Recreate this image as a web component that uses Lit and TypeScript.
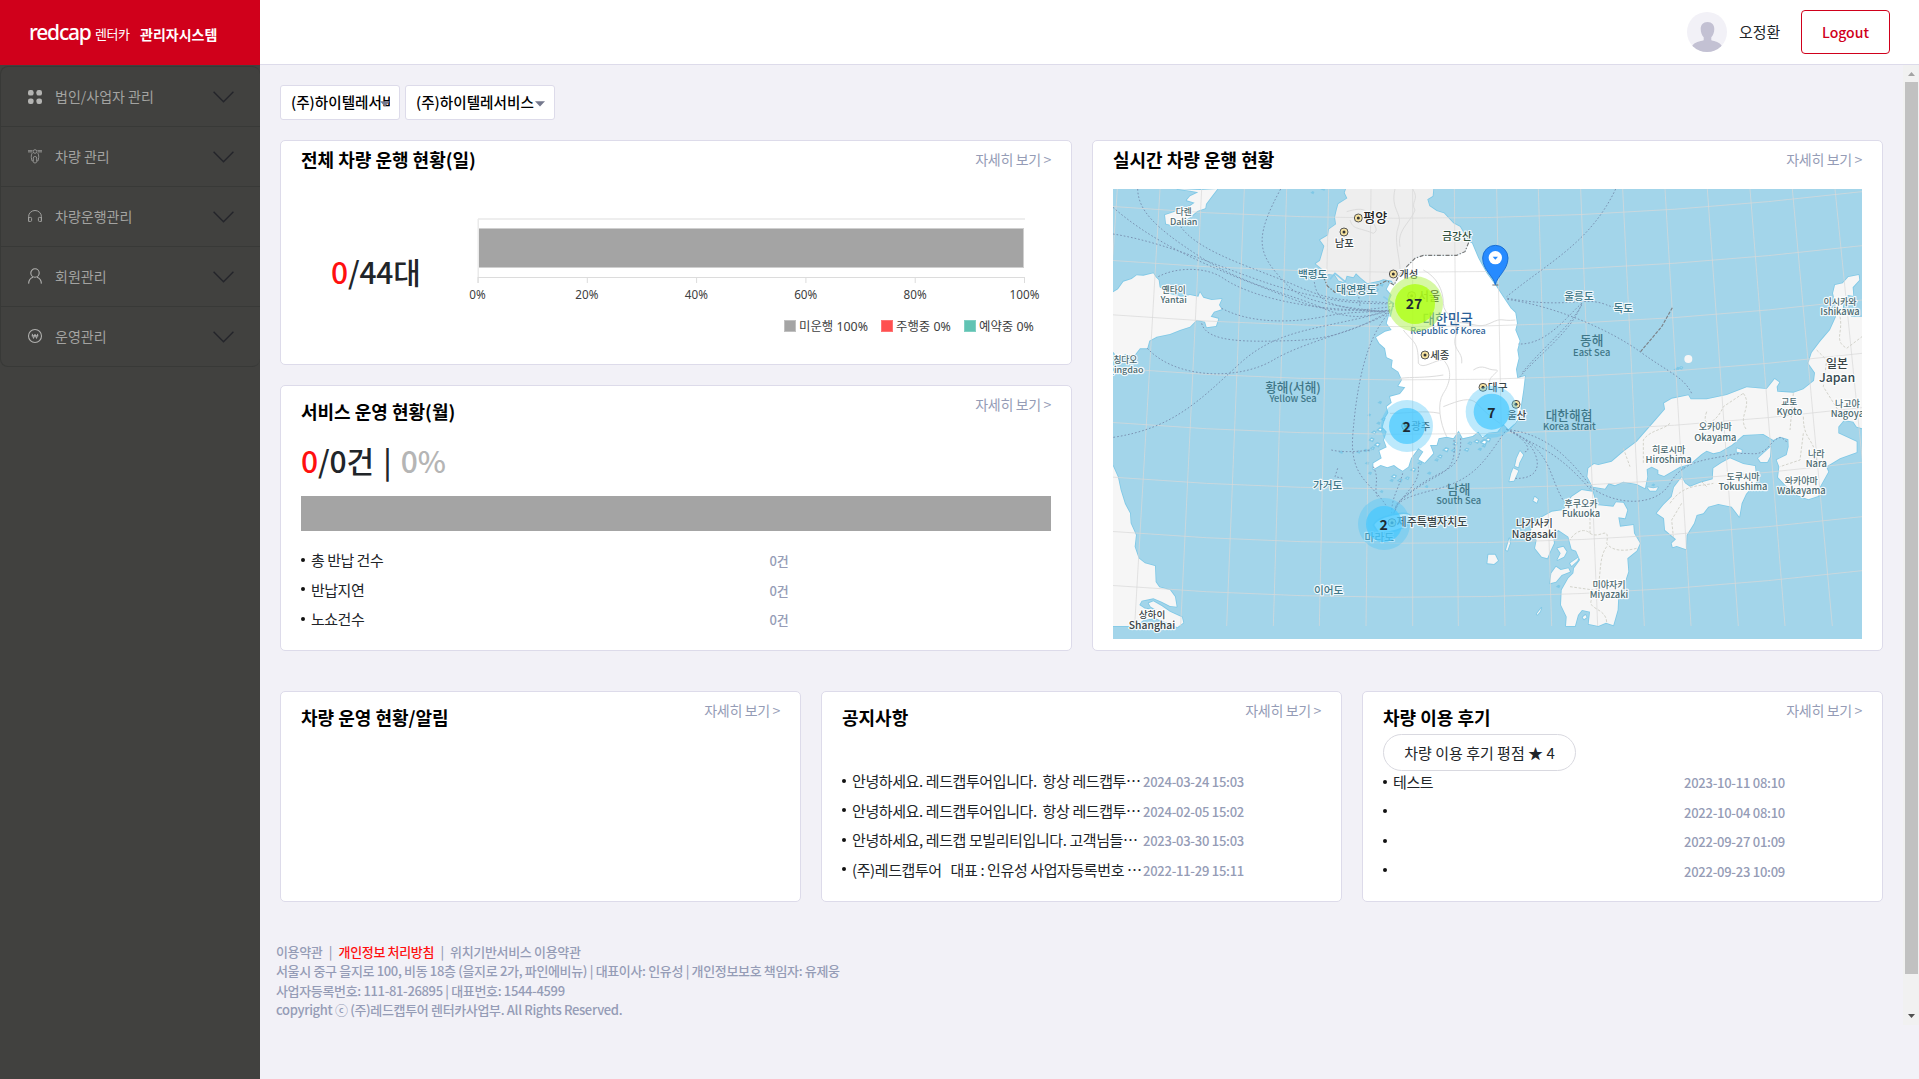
import { LitElement, html, svg, css } from "lit";
import { customElement, property } from "lit/decorators.js";

const MENU = [
  { label: "법인/사업자 관리", icon: "grid" },
  { label: "차량 관리", icon: "scooter" },
  { label: "차량운행관리", icon: "headset" },
  { label: "회원관리", icon: "user" },
  { label: "운영관리", icon: "won" },
];

const ICONS: Record<string, unknown> = {
  grid: svg`<g fill="#b4b4b2" transform="translate(0 1)"><rect x="0" y="0" width="5.6" height="5.6" rx="2.2"/><rect x="8.4" y="0" width="5.6" height="5.6" rx="2.2"/><rect x="0" y="8.4" width="5.6" height="5.6" rx="2.2"/><rect x="8.4" y="8.4" width="5.6" height="5.6" rx="2.2"/></g>`,
  scooter: svg`<g fill="none" stroke="#91918f" stroke-width="1" transform="translate(0 .5)"><path d="M0 1.2H4.6M9.4 1.2H14M0 2.4H4M10 2.4H14"/><circle cx="7" cy="2" r="1.8"/><path d="M4.6 3.2C3.4 4.6 3.2 6 3.3 8L4 11.4H5.2M9.4 3.2C10.6 4.6 10.8 6 10.7 8L10 11.4H8.8"/><rect x="5.3" y="7" width="3.4" height="6.5" rx="1.6"/></g>`,
  headset: svg`<g fill="none" stroke="#a0a09e" stroke-width="1"><path d="M.6 11.5V7.5A6.4 6 0 0 1 13.4 7.5V11.5"/><path d="M.6 8.4H2.6A1 1 0 0 1 3.6 9.4V11.4A1 1 0 0 1 2.6 12.4H.6ZM13.4 8.4H11.4A1 1 0 0 0 10.4 9.4V11.4A1 1 0 0 0 11.4 12.4H13.4Z"/></g>`,
  user: svg`<g fill="none" stroke="#b0b0ae" stroke-width="1.1"><circle cx="7" cy="4" r="4.2"/><path d="M.6 14.6C.8 10.6 3 8.9 5 8.3M13.4 14.6C13.2 10.6 11 8.9 9 8.3"/></g>`,
  won: svg`<g fill="none" stroke="#b0b0ae" stroke-width="1.1"><circle cx="7" cy="7" r="6.5"/><path d="M4.2 4.8L5.5 9.4 7 5.2 8.5 9.4 9.8 4.8M3.6 6.8H10.4" stroke-width="1"/></g>`,
};

const NOTICES = [
  { text: "안녕하세요. 레드캡투어입니다.  항상 레드캡투…", date: "2024-03-24 15:03" },
  { text: "안녕하세요. 레드캡투어입니다.  항상 레드캡투…", date: "2024-02-05 15:02" },
  { text: "안녕하세요, 레드캡 모빌리티입니다. 고객님들…", date: "2023-03-30 15:03" },
  { text: "(주)레드캡투어   대표 : 인유성 사업자등록번호 …", date: "2022-11-29 15:11" },
];

const REVIEWS = [
  { text: "테스트", date: "2023-10-11 08:10" },
  { text: "", date: "2022-10-04 08:10" },
  { text: "", date: "2022-09-27 01:09" },
  { text: "", date: "2022-09-23 10:09" },
];

const RETURNS = [
  { text: "총 반납 건수", date: "0건" },
  { text: "반납지연", date: "0건" },
  { text: "노쇼건수", date: "0건" },
];

/* Side navigation */
@customElement("side-nav")
class SideNav extends LitElement {
  static styles = css`
    :host { display: block; width: 260px; flex: none; background: #41413f; }
    .brand { height: 65px; background: #d0001b; color: #fff; display: flex; align-items: center; box-sizing: border-box; padding: 2px 0 0 29px; }
    .logo { font: 500 21px/26px "Noto Sans", sans-serif; letter-spacing: -1.2px; width: 66px; margin-top: -4px; }
    .sub { font-size: 13px; font-weight: 400; letter-spacing: -0.4px; width: 45px; }
    .sys { font-size: 14px; font-weight: 700; }
    .list { margin-top: 1px; border: 1px solid #383937; border-right: 0; border-radius: 8px; }
    .item { height: 59px; display: flex; align-items: center; border-bottom: 1px solid #383937; padding: 0 26px 0 27px; color: #a3a3a1; font-size: 14px; }
    .item:last-child { border-bottom: 0; }
    .ico { width: 14px; height: 15px; overflow: visible; margin-right: 13px; }
    .label { flex: 1; padding-bottom: 2px; }
    .chev { width: 21px; height: 12px; }
  `;
  render() {
    return html`
      <div class="brand"><span class="logo">redcap</span><span class="sub">렌터카</span><span class="sys">관리자시스템</span></div>
      <div class="list">
        ${MENU.map((m) => html`<div class="item">
          <svg class="ico" viewBox="0 0 14 15">${ICONS[m.icon]}</svg>
          <span class="label">${m.label}</span>
          <svg class="chev" viewBox="0 0 21 12"><path d="M.6.8L10.5 10.7 20.4.8" fill="none" stroke="#24252b" stroke-width="1.4"/></svg>
        </div>`)}
      </div>`;
  }
}

/* Top bar with user and logout */
@customElement("top-bar")
class TopBar extends LitElement {
  static styles = css`
    :host { display: flex; height: 64px; border-bottom: 1px solid #dddbea; background: #fff; align-items: center; justify-content: flex-end; padding-right: 29px; }
    .avatar { width: 40px; height: 40px; margin-right: 12px; }
    .name { font-size: 15px; color: #212529; width: 62px; font-weight: 400; padding-bottom: 1px; }
    .btn { width: 87px; height: 42px; border: 1px solid #d0001b; border-radius: 4px; color: #d0001b; font-size: 14px; font-weight: 500; display: flex; align-items: center; justify-content: center; background: #fff; }
  `;
  render() {
    return html`
      <svg class="avatar" viewBox="0 0 40 40"><defs><clipPath id="c"><circle cx="20" cy="20" r="20"/></clipPath></defs>
        <circle cx="20" cy="20" r="20" fill="#f2f1f7"/>
        <path clip-path="url(#c)" fill="#c3c1d3" d="M20.5 10C25 10 27.3 13 27.3 17C27.3 20.5 26 23.5 24.3 25.2V28.2C28 29.3 32.5 29.8 35 34V40H5V34C7.500 30 13 29.300 16.700 28.200V25.200C15 23.500 13.700 20.500 13.700 17C13.700 13 16 10 20.500 10Z"/></svg>
      <span class="name">오정환</span>
      <div class="btn"><span>Logout</span></div>`;
  }
}

/* White panel with heading and a details link */
@customElement("info-card")
class InfoCard extends LitElement {
  @property() heading = "";
  @property({ type: Boolean, reflect: true }) compact = false;
  static styles = css`
    :host { display: block; box-sizing: border-box; background: #fff; border: 1px solid #dddbea; border-radius: 5px; padding: 0 20px; }
    .head { display: flex; justify-content: space-between; height: 53px; }
    .title { font-size: 18px; line-height: 51px; font-weight: 700; color: #000; }
    .more { font-size: 14px; line-height: 36px; letter-spacing: -0.35px; color: #959cb6; }
    :host([compact]) .head { height: 38px; }
    :host([compact]) .title { line-height: 36px; }
    :host([compact]) .more { line-height: 37px; }
  `;
  render() {
    return html`<div class="head"><span class="title">${this.heading}</span><span class="more">자세히 보기 &gt;</span></div><slot></slot>`;
  }
}

/* Bulleted rows: a text column and a muted value */
@customElement("row-list")
class RowList extends LitElement {
  @property({ attribute: false }) rows: { text: string; date: string }[] = [];
  @property({ type: Boolean, reflect: true }) wide = false;
  static styles = css`
    :host { display: block; }
    .row { display: flex; align-items: center; height: 29.5px; white-space: pre; }
    .dot { width: 4px; height: 4px; border-radius: 2px; background: #111; flex: none; margin-right: 6px; }
    .text { width: 291px; flex: none; font-size: 15px; letter-spacing: -0.4px; color: #212529; }
    .date { font-size: 13px; font-weight: 500; color: #959cb6; letter-spacing: -0.25px; padding-top: 2px; }
    :host([wide]) .text { width: 458.5px; letter-spacing: -0.5px; }
  `;
  render() {
    return this.rows.map((r) => html`<div class="row"><span class="dot"></span><span class="text">${r.text}</span><span class="date">${r.date}</span></div>`);
  }
}

/* Stacked share-of-fleet bar */
@customElement("fleet-chart")
class FleetChart extends LitElement {
  static styles = css`
    :host { display: block; }
    .plot { display: block; width: 591px; height: 184px; }
    .lab { font: 11.7px "Noto Sans", "Noto Sans CJK KR", sans-serif; fill: #404040; }
    .key { font: 12.4px "Noto Sans", "Noto Sans CJK KR", sans-serif; fill: #404040; }
  `;
  render() {
    const ticks = [0, 20, 40, 60, 80, 100];
    const legend = [
      { x: 784, t: "미운행 100%", c: "#a4a4a4", b: "#c0c0c0" },
      { x: 881, t: "주행중 0%", c: "#ff4f4f", b: "#ff7373" },
      { x: 964, t: "예약중 0%", c: "#60c3b3", b: "#80d0c3" },
    ];
    return html`<svg class="plot" viewBox="460 179 591 184">
      <rect x="478" y="218" width="547" height="2" fill="#eeeeee"/>
      <rect x="477.500" y="219" width="1.500" height="64" fill="#eaeaea"/>
      <rect x="479" y="228" width="545" height="40" fill="#cfcfcf"/>
      <rect x="479" y="229" width="544" height="38" fill="#a4a4a4"/>
      <rect x="478" y="277" width="547" height="1" fill="#dcdcdc"/>
      ${ticks.map((t) => svg`<rect x=${477.5 + t * 5.465} y="277" width="1" height="6" fill="#dcdcdc"/><text class="lab" text-anchor="middle" x=${477.5 + t * 5.47} y="299">${t}%</text>`)}
      ${legend.map((l) => svg`<rect x=${l.x + 0.5} y="320.500" width="11" height="11" fill=${l.c} stroke=${l.b}/><text class="key" x=${l.x + 15} y="331">${l.t}</text>`)}
    </svg>`;
  }
}

type Label = [string, number, number, number, string];

const INK = "#3a4446";
const TEAL = "#3f7788";
const SLATE = "#4c6a70";

/* Text, centre x, baseline y, size, colour; units are a third of a pixel */
const LABELS: Label[] = [
  ["다렌", 281, 254, 26, SLATE], ["Dalian", 281, 284, 27, SLATE],
  ["평양", 856, 276, 39, "#222"], ["남포", 763, 350, 31, INK],
  ["금강산", 1101, 329, 32, "#30503c"], ["백령도", 668, 443, 32, TEAL],
  ["대연평도", 799, 491, 33, TEAL], ["개성", 956, 443, 31, INK],
  ["서울", 1017, 512, 36, "#222"],
  ["세종", 1049, 686, 31, INK],
  ["옌타이", 251, 488, 26, SLATE], ["Yantai", 251, 518, 27, SLATE],
  ["칭다오", 106, 700, 26, SLATE], ["Qingdao", 106, 730, 27, SLATE],
  ["울릉도", 1467, 510, 32, TEAL], ["독도", 1600, 547, 32, TEAL],
  ["이시카와", 2250, 525, 27, SLATE], ["Ishikawa", 2250, 555, 28, SLATE],
  ["일본", 2241, 715, 36, INK], ["Japan", 2241, 755, 37, "#34484f"],
  ["대구", 1223, 783, 32, INK], ["울산", 1280, 868, 31, INK], ["광주", 992, 899, 31, INK],
  ["교토", 2098, 824, 26, SLATE], ["Kyoto", 2098, 855, 28, SLATE],
  ["나고야", 2272, 831, 27, SLATE], ["Nagoya", 2272, 862, 28, SLATE],
  ["오카야마", 1876, 900, 27, SLATE], ["Okayama", 1876, 932, 28, SLATE],
  ["히로시마", 1736, 968, 27, SLATE], ["Hiroshima", 1736, 998, 28, SLATE],
  ["나라", 2179, 982, 27, SLATE], ["Nara", 2179, 1011, 28, SLATE],
  ["도쿠시마", 1959, 1051, 27, SLATE], ["Tokushima", 1959, 1080, 28, SLATE],
  ["와카야마", 2134, 1062, 27, SLATE], ["Wakayama", 2134, 1092, 28, SLATE],
  ["후쿠오카", 1473, 1132, 27, SLATE], ["Fukuoka", 1473, 1162, 28, SLATE],
  ["나가사키", 1333, 1191, 30, INK], ["Nagasaki", 1333, 1224, 31, INK],
  ["미야자키", 1557, 1374, 27, SLATE], ["Miyazaki", 1557, 1404, 28, SLATE],
  ["가거도", 713, 1077, 32, TEAL], ["이어도", 716, 1391, 32, TEAL],
  ["마라도", 868, 1233, 32, TEAL], ["제주특별자치도", 1026, 1189, 33, INK],
  ["상하이", 186, 1465, 29, INK], ["Shanghai", 186, 1498, 31, INK],
];

const SEA_LABELS: Label[] = [
  ["대한민국", 1073, 583, 41, "#2b6198"], ["Republic of Korea", 1074, 613, 27, "#2b6198"],
  ["황해(서해)", 609, 787, 38, TEAL], ["Yellow Sea", 609, 817, 28, TEAL],
  ["동해", 1505, 646, 38, TEAL], ["East Sea", 1505, 677, 28, TEAL],
  ["대한해협", 1437, 870, 38, TEAL], ["Korea Strait", 1438, 901, 28, TEAL],
  ["남해", 1106, 1092, 38, TEAL], ["South Sea", 1106, 1122, 28, TEAL],
];

const CITIES = [[805, 264], [762, 306], [910, 432], [965, 497], [1005, 675], [1179, 772], [1278, 823], [906, 1178], [947, 888]];

const MERIDIANS = [[82, -5], [210, 134], [335, 272], [463, 410], [590, 550], [716, 688], [843, 828], [968, 968], [1093, 1105], [1220, 1245], [1345, 1385], [1472, 1523], [1598, 1663], [1725, 1803], [1852, 1945], [1980, 2085], [2107, 2227], [2235, 2367]];
const PARALLELS = [265, 427, 590, 750, 913, 1077, 1240, 1402];

const CHINA = [
  "M262 177L330 180 382 177 362 203 348 222 346 235 322 243 300 262 280 275 242 285 228 281 225 255 250 247 270 237 300 228 314 218 290 211 300 199 325 187 300 182Z",
  "M69 487L84 478 100 455 125 447 140 436 160 437 190 430 197 441 206 450 209 472 240 492 275 500 300 495 325 500 330 487 340 503 365 510 395 507 387 525 395 538 372 545 362 560 385 566 378 588 350 592 345 575 320 570 300 590 270 600 240 612 200 620 178 632 172 655 150 655 130 680 105 672 90 690 69 665Z",
  "M69 1008L84 1042 92 1080 105 1122 120 1150 122 1180 138 1215 134 1250 146 1285 165 1300 195 1308 197 1356 208 1372 240 1380 255 1400 260 1430 240 1428 215 1415 190 1405 155 1412 148 1425 165 1436 200 1440 182 1430 176 1420 190 1414 215 1428 240 1445 276 1462 280 1478 262 1492 235 1480 195 1465 160 1470 140 1488H69Z",
];
const NORTH = "M768 177L764 188 772 205 745 222 740 240 735 262 738 283 717 298 714 316 690 330 703 348 696 372 690 392 677 401 700 420 702 438 716 432 735 435 746 452 764 457 770 437 790 442 798 430 812 443 832 460 868 452 880 448 905 452 912 465 925 440 950 410 975 385 1000 376 1060 376 1100 376 1125 365 1137 335 1110 290 1090 280 1062 250 1040 243 1018 228 1012 208 1028 198 1030 177Z";
const SOUTH = "M1137 335L1146 340 1165 385 1190 430 1218 468 1242 505 1262 535 1276 548 1281 580 1276 600 1289 632 1282 660 1286 685 1278 718 1282 745 1305 738 1300 780 1294 820 1288 860 1275 880 1255 898 1240 882 1222 905 1195 908 1178 922 1165 905 1148 918 1118 925 1106 902 1090 925 1070 920 1046 925 1040 945 1020 945 1030 970 1004 998 985 988 1000 965 985 955 963 985 955 1010 938 1022 925 1015 912 1005 892 1012 872 1005 850 1018 850 1000 875 985 868 962 890 952 882 930 890 905 878 892 885 865 895 848 890 830 905 818 900 800 930 792 946 772 925 768 936 750 925 725 905 712 908 690 890 682 885 655 868 640 858 622 885 605 905 600 890 580 900 545 895 520 905 495 890 478 902 455 912 465 925 440 950 410 975 385 1000 376 1100 376 1125 365Z";
const JAPAN = [
  "M2306 435L2275 441 2258 460 2235 465 2229 490 2236 520 2238 560 2220 600 2190 635 2165 668 2155 700 2175 728 2172 752 2140 778 2110 788 2062 785 2060 770 2068 757 2054 747 2030 777 1970 772 1910 795 1850 808 1802 808 1795 796 1745 806 1722 820 1725 838 1690 878 1640 935 1600 965 1565 995 1525 1005 1512 1002 1495 1015 1492 1040 1508 1070 1545 1076 1556 1060 1575 1066 1600 1055 1640 1062 1665 1075 1672 1040 1670 1018 1685 1010 1705 1020 1705 1032 1722 1038 1770 1010 1800 1002 1835 972 1850 962 1870 970 1890 965 1925 945 1960 915 2020 912 2050 930 2070 920 2095 928 2096 950 2090 975 2060 990 2068 1010 2064 1042 2095 1075 2120 1095 2155 1108 2185 1098 2190 1070 2215 1025 2208 1010 2250 985 2300 967 2300 935 2245 910 2245 890 2262 870 2290 875 2300 890 2316 895V560L2285 560 2258 540 2262 505 2275 495 2290 498 2288 472 2308 450Z",
  "M1445 1100L1475 1080 1508 1085 1520 1125 1570 1130 1578 1117 1600 1118 1612 1140 1605 1165 1585 1162 1590 1190 1630 1185 1632 1210 1650 1240 1640 1262 1612 1285 1615 1325 1600 1370 1585 1395 1583 1440 1570 1486 1548 1478 1525 1488 1496 1482 1500 1445 1476 1440 1464 1455 1455 1488H1428L1430 1460 1413 1425 1415 1380 1435 1345 1450 1330 1452 1315 1470 1290 1458 1262 1445 1258 1435 1220 1405 1200 1388 1210 1392 1240 1380 1265 1372 1285 1355 1280 1335 1255 1340 1230 1318 1210 1340 1170 1385 1145 1420 1140Z",
  "M1775 1042L1785 1060 1800 1070 1830 1058 1868 1048 1870 1015 1895 998 1920 985 1960 1002 1995 1008 2000 1055 1968 1092 1955 1120 1948 1160 1925 1130 1885 1122 1855 1130 1840 1150 1820 1155 1812 1180 1790 1215 1788 1258 1760 1248 1748 1252 1745 1240 1758 1228 1725 1200 1722 1165 1700 1150 1720 1125 1745 1100 1752 1072Z",
  "M2042 950L2018 972 2004 985 2012 996 2032 996 2040 980Z",
  "M1940 955L1955 960 1955 968 1940 965Z", "M1672 1072L1690 1075 1704 1072 1698 1082 1680 1082Z",
  "M1290 963L1300 975 1288 998 1285 1012 1275 1008 1280 985Z", "M1270 1015L1285 1022 1272 1052 1258 1054 1264 1030Z",
  "M1334 1100L1344 1108 1340 1118 1330 1112Z", "M1402 1255L1420 1250 1430 1265 1422 1280 1402 1290 1412 1270Z",
  "M1380 1360L1384 1330 1398 1310 1412 1320 1435 1315 1440 1325 1415 1335 1398 1355Z",
  "M1195 1274L1215 1274 1224 1292 1212 1302 1192 1300Z", "M1248 1260L1258 1225 1260 1240 1252 1262Z",
  "M1340 1452L1354 1434 1350 1445 1342 1454Z", "M1440 1300L1466 1282 1462 1292 1445 1308Z",
  "M1478 1462L1486 1455 1490 1462 1482 1468Z",
];

const ISLETS = [[870, 900, 8], [852, 908, 6], [845, 930, 7], [862, 945, 8], [848, 955, 5], [835, 962, 4], [866, 880, 4], [880, 868, 5], [826, 962, 4], [840, 1030, 4], [832, 1000, 4], [912, 1040, 7], [930, 1052, 6], [952, 1045, 5], [970, 1020, 7], [990, 1000, 5], [1018, 1030, 4], [1050, 980, 6], [1040, 990, 4], [1068, 960, 8], [1090, 962, 5], [1096, 942, 6], [1130, 960, 6], [1140, 940, 5], [1160, 935, 7], [1182, 935, 9], [1170, 958, 4], [1010, 1070, 3], [875, 1085, 3], [905, 1052, 4], [838, 855, 3], [870, 818, 4], [1182, 938, 10], [1194, 930, 8], [1182, 948, 4], [754, 967, 4], [806, 966, 4], [668, 188, 3], [700, 177, 5], [1763, 716, 4], [1773, 714, 5], [1757, 719, 3], [860, 480, 5], [842, 490, 3], [875, 465, 4], [1405, 1370, 4], [1778, 1015, 4], [1690, 1065, 3]];

const ROUTES = [
  "M143 177C145 240 190 290 330 380S600 490 700 535S860 552 905 536",
  "M69 232C180 330 330 400 500 465S700 560 915 528",
  "M69 312C250 340 450 440 600 480S800 520 915 522",
  "M272 290C330 370 500 415 620 468S780 508 910 520",
  "M572 177C500 310 500 360 560 430S640 520 890 546",
  "M205 440C260 410 350 410 400 445S600 545 905 542",
  "M395 535C480 580 600 580 700 560S850 550 905 540",
  "M335 580C350 640 480 635 600 632S800 600 905 540",
  "M172 655C260 750 450 750 550 690S850 590 905 540",
  "M70 922C250 895 330 810 450 700S700 600 905 540",
  "M672 445C675 500 700 520 780 535S860 545 900 540",
  "M805 490L810 530",
  "M898 548C830 620 800 760 788 920C780 1050 850 1060 890 1130",
  "M724 960C760 968 800 965 845 960", "M743 1015L735 1040 760 1045",
  "M850 1010C870 1050 850 1070 862 1100", "M938 1030C925 1080 905 1100 905 1150",
  "M985 1010C990 1060 950 1080 912 1140",
  "M1092 930C1100 1030 1060 1020 980 1075S930 1120 910 1150",
  "M1112 925C1115 1030 1060 1010 975 1075S930 1120 912 1150",
  "M1245 905C1180 1000 1150 1050 1030 1080S930 1120 910 1150",
  "M1250 898C1350 910 1420 960 1495 1060", "M1250 898C1340 950 1400 960 1500 1078",
  "M1250 898C1390 960 1370 1030 1422 1115", "M1250 898C1340 925 1390 1050 1275 1045",
  "M1250 898C1310 925 1330 970 1300 965",
  "M1500 1070C1580 1130 1700 1130 1740 1060S1850 990 1920 975S2000 990 2040 945S2080 938 2092 934",
  "M1577 177C1500 340 1370 400 1250 500", "M1252 505C1350 522 1400 520 1470 515S1550 530 1570 530",
  "M1252 508C1400 530 1560 600 1650 665S1780 740 1805 790",
  "M1475 520C1450 600 1340 680 1290 740", "M1475 520C1430 560 1370 645 1285 642",
  "M1475 525C1440 590 1360 650 1295 730",
];

const PROVINCES = "M915 177C900 240 940 250 925 290S930 380 930 420M968 177C990 210 960 215 975 240C960 280 920 300 930 350M770 245C820 230 830 240 840 262S870 300 850 310C800 290 790 300 780 270M1000 420C1040 440 1060 480 1060 520S1110 560 1100 610M940 600C970 640 985 630 985 700C1000 720 1030 690 1060 690M1090 580C1140 570 1160 600 1200 580S1230 575 1276 570M1060 690C1090 720 1080 760 1060 790S1050 880 1070 920M930 745C970 740 1000 745 1060 735M1060 830C1110 810 1140 800 1160 820S1200 860 1230 880M900 850C960 850 1000 840 1050 850M1150 720C1180 700 1190 720 1215 720S1190 740 1200 760M1100 610C1080 660 1120 660 1115 700";
const PREFECTURES = "M2250 560C2260 610 2230 630 2270 655L2316 620M2180 660L2210 690 2200 770 2250 850M1960 790C1990 830 1940 860 1970 900M1850 845C1830 900 1880 880 1900 830L1960 790M1740 880C1720 900 1680 900 1660 930V1000M1600 955L1620 1010M2110 790L2100 900M2140 860C2140 940 2180 920 2180 1010M2140 910L2130 990 2070 1010M1740 1120C1780 1060 1830 1070 1870 1060M1775 1120L1745 1170 1750 1220M1850 1070L1830 1050M1500 1150V1210C1480 1190 1450 1210 1440 1230M1500 1210C1530 1230 1560 1180 1550 1240C1570 1270 1620 1260 1640 1255M1550 1250C1520 1290 1540 1360 1510 1400S1550 1430 1550 1478M1440 1370L1510 1380";

/* Live vehicle map with clustered positions */
@customElement("live-map")
class LiveMap extends LitElement {
  static styles = css`
    :host { display: block; margin-top: 10px; }
    .map { display: block; width: 749px; height: 450px; background: #a3d5ea; }
    .lbl { font-family: "Noto Sans CJK KR", sans-serif; font-weight: 500; text-anchor: middle; }
    .sea { font-family: "Noto Sans CJK KR", sans-serif; font-weight: 500; text-anchor: middle; }
    .halo { stroke: #fff; stroke-opacity: 0.85; stroke-width: 7px; stroke-linejoin: round; paint-order: stroke; }
    .num { font: 700 42px "Noto Sans CJK KR", sans-serif; fill: #1d2a33; text-anchor: middle; }
  `;
  render() {
    return html`<svg class="map" viewBox="69 177 2247 1350">
      <g stroke="#7fc8e6" stroke-width="5" stroke-linejoin="round">
        <g fill="#f6f6f6">${[...CHINA, ...JAPAN].map((d) => svg`<path d=${d}/>`)}</g>
        <path d=${SOUTH} fill="#fff"/><path d=${NORTH} fill="#eeeeee"/>
        <path d="M850 1185C860 1165 900 1152 935 1150S965 1165 955 1180S900 1212 865 1208Z" fill="#fff"/>
      </g>
      <g fill="#f6f6f6">${[...CHINA, ...JAPAN].map((d) => svg`<path d=${d}/>`)}<circle cx="1795" cy="687" r="12"/></g>
      <path d=${SOUTH} fill="#fff"/><path d=${NORTH} fill="#eeeeee"/>
      <path d="M720 448L735 430 765 455 750 470M880 500L910 520 900 560" fill="none" stroke="#8accea" stroke-width="5"/>
      <g fill="#fff" stroke="#7fc8e6" stroke-width="4">${ISLETS.map((p) => svg`<path d="M${p[0] - p[2]} ${p[1]}l${p[2]} ${-p[2] * 0.8} ${p[2] * 0.9} ${p[2] * 0.4} ${-p[2] * 0.5} ${p[2]}Z"/>`)}</g>
      <g fill="none" stroke="#d9d9d9" stroke-opacity="0.7" stroke-width="3">
        ${MERIDIANS.map((m) => svg`<path d="M${m[0]} 177L${m[1]} 1488"/>`)}
        ${PARALLELS.map((y) => svg`<path d="M69 ${y - 35.5}Q1192.5 ${y + 53} 2316 ${y - 80}"/>`)}
      </g>
      <path d=${PROVINCES} fill="none" stroke="#dcdcdc" stroke-width="3"/>
      <path d=${PREFECTURES} fill="none" stroke="#d3d3cb" stroke-width="3" stroke-dasharray="8 5"/>
      <path d="M700 440L712 468 735 487 800 482 860 466 890 452 912 465 925 440 950 410 975 385 1000 376 1060 376 1100 376 1125 365 1137 335" fill="none" stroke="#777" stroke-width="3.500" stroke-dasharray="12 5 4 5"/>
      <path d="M1747 533L1715 590 1650 667" fill="none" stroke="#7c8288" stroke-width="3.500" stroke-dasharray="10 4"/>
      <g fill="none" stroke="#7b94b4" stroke-width="3" stroke-dasharray="5 6">${ROUTES.map((d) => svg`<path d=${d}/>`)}</g>
      ${CITIES.map((c) => svg`<circle cx=${c[0]} cy=${c[1]} r="12" fill="#f7e3a0" stroke="#555" stroke-width="3"/><circle cx=${c[0]} cy=${c[1]} r="4.500" fill="#333"/>`)}
      ${LABELS.map((l) => svg`<text class="lbl halo" x=${l[1]} y=${l[2]} font-size=${l[3]} fill=${l[4]}>${l[0]}</text>`)}
      ${SEA_LABELS.map((l) => svg`<text class="sea" x=${l[1]} y=${l[2]} font-size=${l[3]} fill=${l[4]}>${l[0]}</text>`)}
      <circle cx="976" cy="522" r="83" fill="#b5f25a" fill-opacity="0.55"/><circle cx="975" cy="522" r="60" fill="#aeff14" fill-opacity="0.8"/>
      <text class="num" x="972" y="538">27</text>
      ${[[951, 888, "2"], [1205, 845, "7"], [882, 1182, "2"]].map((m) => svg`<circle cx=${m[0]} cy=${m[1]} r="78" fill="#4fc6f8" fill-opacity="0.38"/><circle cx=${m[0]} cy=${m[1]} r="54" fill="#45c7ff" fill-opacity="0.7"/><text class="num" x=${Number(m[0]) - 1} y=${Number(m[1]) + 18}>${m[2]}</text>`)}
      <path d="M1207 465H1225" stroke="#555" stroke-opacity="0.6" stroke-width="4"/>
      <path d="M1216 464C1212 440 1178 420 1178 384A38 38 0 0 1 1254 384C1254 420 1220 440 1216 464Z" fill="#268bff" stroke="#1a6fd4" stroke-width="3"/>
      <circle cx="1216" cy="383" r="20" fill="#fff"/><path d="M1208 380H1224L1216 389Z" fill="#268bff"/>
    </svg>`;
  }
}

@customElement("app-root")
class AppRoot extends LitElement {
  static styles = css`
    :host { display: flex; height: 1079px; overflow: hidden; background: #f2f1f7; font-family: "Noto Sans CJK KR", "Noto Sans", sans-serif; color: #212529; }
    .main { flex: 1; min-width: 0; display: flex; flex-direction: column; }
    .body { flex: 1; display: flex; align-items: flex-start; }
    .content { flex: 1; padding: 20px 20px 0; min-width: 0; }
    .filters { display: flex; gap: 5px; margin-bottom: 20px; }
    .select { box-sizing: border-box; height: 35px; border: 1px solid #dddbea; border-radius: 3px; background: #fff; padding: 0 9px 2px 10px; display: flex; align-items: center; font-size: 14.6px; font-weight: 500; color: #000; position: relative; }
    .select.narrow { width: 120px; }
    .select.full { width: 150px; }
    .value { overflow: hidden; white-space: nowrap; flex: 1; }
    .arrow { position: absolute; right: 9px; top: 15px; width: 10px; height: 6px; }
    .top { display: grid; grid-template-columns: 1fr 1fr; gap: 20px; height: 510px; }
    .stack { display: grid; grid-template-rows: 225px 266px; gap: 20px; }
    .fleet { display: flex; }
    .count { width: 159px; box-sizing: border-box; padding-left: 30px; font-size: 30px; font-weight: 500; letter-spacing: -0.2px; line-height: 184px; }
    .red { color: #ff1010; }
    .big { font-size: 30px; font-weight: 500; line-height: 42px; height: 46px; white-space: pre; letter-spacing: -0.1px; word-spacing: 2.5px; }
    .pct { color: #b5b5b5; }
    .bar { height: 35px; background: #a4a4a4; margin: 11px 0 14px; }
    .bottom { display: grid; grid-template-columns: repeat(3, 1fr); gap: 20px; height: 211px; margin-top: 41px; }
    .news { margin-top: 21px; }
    .pill { display: flex; box-sizing: border-box; align-items: center; justify-content: center; width: 193px; height: 37px; border: 1px solid #d9d9e0; border-radius: 19px; font-size: 15px; margin-top: -11px; padding-bottom: 1px; }
    .reviews { margin-top: -4px; }
    .foot { margin: 39.5px 0 0 -4px; font-size: 13px; line-height: 19.6px; font-weight: 500; color: #959cb6; letter-spacing: -0.34px; white-space: pre; }
    .foot b { color: #ff1010; font-weight: 500; }
    .sep { margin: 0 1.2px; }
    .scroll { width: 16px; height: 960px; flex: none; background: #f1f1f1; display: flex; flex-direction: column; align-items: center; }
    .up { width: 7px; height: 4px; margin: 7px 0 6px; }
    .thumb { width: 13px; height: 892px; background: #c1c1c1; }
    .down { width: 7px; height: 4px; margin-top: 40px; }
  `;
  render() {
    const arrow = html`<svg class="arrow" viewBox="0 0 10 6"><path d="M0 .2H10L5 5.600Z" fill="#74788d"/></svg>`;
    return html`
      <side-nav></side-nav>
      <div class="main">
        <top-bar></top-bar>
        <div class="body">
          <div class="content">
            <div class="filters">
              <div class="select narrow"><span class="value">(주)하이텔레서비스</span>${arrow}</div>
              <div class="select full"><span class="value">(주)하이텔레서비스</span>${arrow}</div>
            </div>
            <div class="top">
              <div class="stack">
                <info-card compact heading="전체 차량 운행 현황(일)">
                  <div class="fleet"><div class="count"><span class="red">0</span>/44대</div><fleet-chart></fleet-chart></div>
                </info-card>
                <info-card heading="서비스 운영 현황(월)">
                  <div class="big"><span class="red">0</span>/0건 | <span class="pct">0%</span></div>
                  <div class="bar"></div>
                  <row-list wide .rows=${RETURNS}></row-list>
                </info-card>
              </div>
              <info-card compact heading="실시간 차량 운행 현황"><live-map></live-map></info-card>
            </div>
            <div class="bottom">
              <info-card heading="차량 운영 현황/알림"></info-card>
              <info-card heading="공지사항"><row-list class="news" .rows=${NOTICES}></row-list></info-card>
              <info-card heading="차량 이용 후기">
                <div class="pill">차량 이용 후기 평점 ★ 4</div>
                <row-list class="reviews" .rows=${REVIEWS}></row-list>
              </info-card>
            </div>
            <div class="foot"><div>이용약관 <span class="sep"> | </span> <b>개인정보 처리방침</b> <span class="sep"> | </span> 위치기반서비스 이용약관</div><div>서울시 중구 을지로 100, 비동 18층 (을지로 2가, 파인에비뉴) | 대표이사: 인유성 | 개인정보보호 책임자: 유제웅</div><div>사업자등록번호: 111-81-26895 | 대표번호: 1544-4599</div><div>copyright ⓒ (주)레드캡투어 렌터카사업부. All Rights Reserved.</div></div>
          </div>
          <div class="scroll">
            <svg class="up" viewBox="0 0 7 4"><path d="M0 4L3.500 0 7 4Z" fill="#a3a3a3"/></svg>
            <div class="thumb"></div>
            <svg class="down" viewBox="0 0 7 4"><path d="M0 0L3.500 4 7 0Z" fill="#505050"/></svg>
          </div>
        </div>
      </div>`;
  }
}
